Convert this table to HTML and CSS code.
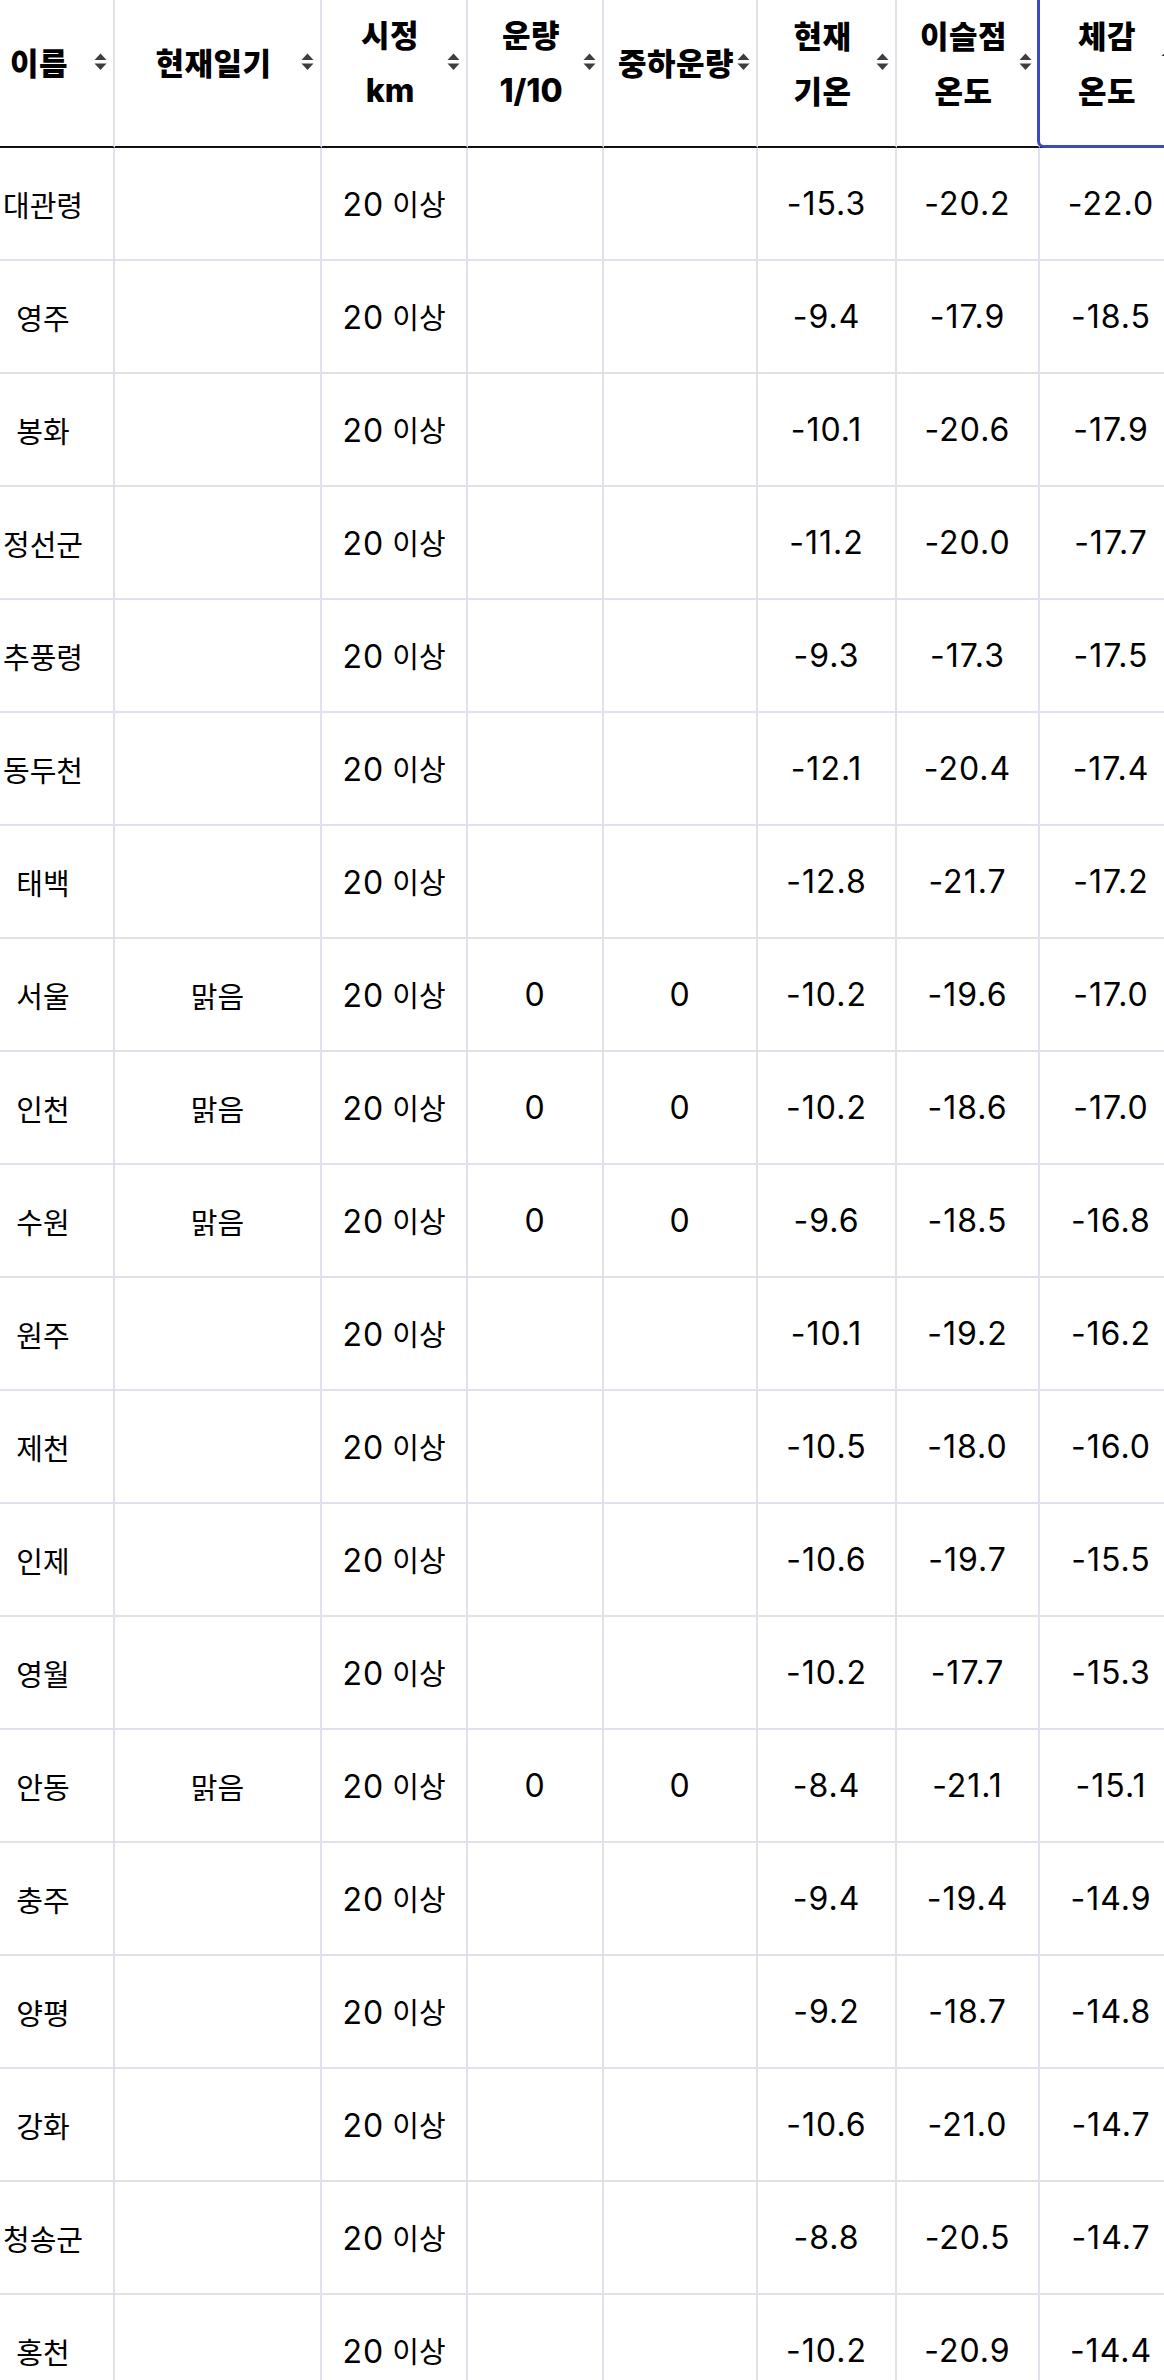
FILE: index.html
```html
<!DOCTYPE html>
<html lang="ko">
<head>
<meta charset="utf-8">
<title>관측 자료</title>
<link rel="stylesheet" href="styles.css">
</head>
<body>
<div class="viewport">
  <table class="obs">
    <colgroup>
      <col class="c-name"><col class="c-wx"><col class="c-vis"><col class="c-cloud"><col class="c-low"><col class="c-temp"><col class="c-dew"><col class="c-feel">
    </colgroup>
    <thead>
      <tr>
        <th>이름<span class="sort"><svg viewBox="0 0 15 18" width="15" height="18"><path d="M7.5 0.5 L13.5 7 L1.5 7 Z"/><path d="M1.5 10.5 L13.5 10.5 L7.5 17 Z"/></svg></span></th>
        <th>현재일기<span class="sort"><svg viewBox="0 0 15 18" width="15" height="18"><path d="M7.5 0.5 L13.5 7 L1.5 7 Z"/><path d="M1.5 10.5 L13.5 10.5 L7.5 17 Z"/></svg></span></th>
        <th>시정<br><span class="lat">km</span><span class="sort"><svg viewBox="0 0 15 18" width="15" height="18"><path d="M7.5 0.5 L13.5 7 L1.5 7 Z"/><path d="M1.5 10.5 L13.5 10.5 L7.5 17 Z"/></svg></span></th>
        <th>운량<br><span class="lat">1/10</span><span class="sort"><svg viewBox="0 0 15 18" width="15" height="18"><path d="M7.5 0.5 L13.5 7 L1.5 7 Z"/><path d="M1.5 10.5 L13.5 10.5 L7.5 17 Z"/></svg></span></th>
        <th>중하운량<span class="sort"><svg viewBox="0 0 15 18" width="15" height="18"><path d="M7.5 0.5 L13.5 7 L1.5 7 Z"/><path d="M1.5 10.5 L13.5 10.5 L7.5 17 Z"/></svg></span></th>
        <th>현재<br>기온<span class="sort"><svg viewBox="0 0 15 18" width="15" height="18"><path d="M7.5 0.5 L13.5 7 L1.5 7 Z"/><path d="M1.5 10.5 L13.5 10.5 L7.5 17 Z"/></svg></span></th>
        <th>이슬점<br>온도<span class="sort"><svg viewBox="0 0 15 18" width="15" height="18"><path d="M7.5 0.5 L13.5 7 L1.5 7 Z"/><path d="M1.5 10.5 L13.5 10.5 L7.5 17 Z"/></svg></span></th>
        <th class="focused">체감<br>온도<span class="sort sort-active"><svg viewBox="0 0 15 18" width="15" height="18"><path d="M7.5 0.5 L13.5 7 L1.5 7 Z"/></svg></span></th>
      </tr>
    </thead>
    <tbody>
      <tr><td>대관령</td><td></td><td><span class="n">20</span> 이상</td><td></td><td></td><td class="n">-15.3</td><td class="n">-20.2</td><td class="n">-22.0</td></tr>
      <tr><td>영주</td><td></td><td><span class="n">20</span> 이상</td><td></td><td></td><td class="n">-9.4</td><td class="n">-17.9</td><td class="n">-18.5</td></tr>
      <tr><td>봉화</td><td></td><td><span class="n">20</span> 이상</td><td></td><td></td><td class="n">-10.1</td><td class="n">-20.6</td><td class="n">-17.9</td></tr>
      <tr><td>정선군</td><td></td><td><span class="n">20</span> 이상</td><td></td><td></td><td class="n">-11.2</td><td class="n">-20.0</td><td class="n">-17.7</td></tr>
      <tr><td>추풍령</td><td></td><td><span class="n">20</span> 이상</td><td></td><td></td><td class="n">-9.3</td><td class="n">-17.3</td><td class="n">-17.5</td></tr>
      <tr><td>동두천</td><td></td><td><span class="n">20</span> 이상</td><td></td><td></td><td class="n">-12.1</td><td class="n">-20.4</td><td class="n">-17.4</td></tr>
      <tr><td>태백</td><td></td><td><span class="n">20</span> 이상</td><td></td><td></td><td class="n">-12.8</td><td class="n">-21.7</td><td class="n">-17.2</td></tr>
      <tr><td>서울</td><td>맑음</td><td><span class="n">20</span> 이상</td><td class="n">0</td><td class="n">0</td><td class="n">-10.2</td><td class="n">-19.6</td><td class="n">-17.0</td></tr>
      <tr><td>인천</td><td>맑음</td><td><span class="n">20</span> 이상</td><td class="n">0</td><td class="n">0</td><td class="n">-10.2</td><td class="n">-18.6</td><td class="n">-17.0</td></tr>
      <tr><td>수원</td><td>맑음</td><td><span class="n">20</span> 이상</td><td class="n">0</td><td class="n">0</td><td class="n">-9.6</td><td class="n">-18.5</td><td class="n">-16.8</td></tr>
      <tr><td>원주</td><td></td><td><span class="n">20</span> 이상</td><td></td><td></td><td class="n">-10.1</td><td class="n">-19.2</td><td class="n">-16.2</td></tr>
      <tr><td>제천</td><td></td><td><span class="n">20</span> 이상</td><td></td><td></td><td class="n">-10.5</td><td class="n">-18.0</td><td class="n">-16.0</td></tr>
      <tr><td>인제</td><td></td><td><span class="n">20</span> 이상</td><td></td><td></td><td class="n">-10.6</td><td class="n">-19.7</td><td class="n">-15.5</td></tr>
      <tr><td>영월</td><td></td><td><span class="n">20</span> 이상</td><td></td><td></td><td class="n">-10.2</td><td class="n">-17.7</td><td class="n">-15.3</td></tr>
      <tr><td>안동</td><td>맑음</td><td><span class="n">20</span> 이상</td><td class="n">0</td><td class="n">0</td><td class="n">-8.4</td><td class="n">-21.1</td><td class="n">-15.1</td></tr>
      <tr><td>충주</td><td></td><td><span class="n">20</span> 이상</td><td></td><td></td><td class="n">-9.4</td><td class="n">-19.4</td><td class="n">-14.9</td></tr>
      <tr><td>양평</td><td></td><td><span class="n">20</span> 이상</td><td></td><td></td><td class="n">-9.2</td><td class="n">-18.7</td><td class="n">-14.8</td></tr>
      <tr><td>강화</td><td></td><td><span class="n">20</span> 이상</td><td></td><td></td><td class="n">-10.6</td><td class="n">-21.0</td><td class="n">-14.7</td></tr>
      <tr><td>청송군</td><td></td><td><span class="n">20</span> 이상</td><td></td><td></td><td class="n">-8.8</td><td class="n">-20.5</td><td class="n">-14.7</td></tr>
      <tr><td>홍천</td><td></td><td><span class="n">20</span> 이상</td><td></td><td></td><td class="n">-10.2</td><td class="n">-20.9</td><td class="n">-14.4</td></tr>
    </tbody>
  </table>
</div>
</body>
</html>
```

FILE: styles.css
```css
html, body {
  margin: 0;
  padding: 0;
  background: #ffffff;
}

.viewport {
  width: 1164px;
  height: 2380px;
  overflow: hidden;
}

.obs {
  margin-left: -27px;
  margin-top: -23px;
  table-layout: fixed;
  width: 1211px;
  border-collapse: separate;
  border-spacing: 0;
  font-family: "Noto Sans CJK KR", "Noto Sans", sans-serif;
  color: #000000;
}

.c-name { width: 142px; }
.c-wx { width: 207px; }
.c-vis { width: 146px; }
.c-cloud { width: 136px; }
.c-low { width: 154px; }
.c-temp { width: 139px; }
.c-dew { width: 143px; }
.c-feel { width: 144px; }

.obs thead tr {
  height: 171px;
}

.obs tbody tr {
  height: 113px;
}

.obs th {
  position: relative;
  font-weight: 900;
  font-size: 31px;
  letter-spacing: 0.5px;
  line-height: 55px;
  padding: 0 18px 0 10px;
  text-align: center;
  vertical-align: middle;
  border-right: 2px solid #dfe1ec;
  border-bottom: 2px solid #111111;
  white-space: nowrap;
}

.obs th .lat {
  font-family: Inter, "Noto Sans", sans-serif;
  font-size: 32px;
  font-weight: 800;
  letter-spacing: 0;
}

.obs th .sort {
  position: absolute;
  right: 5px;
  top: 50%;
  width: 15px;
  height: 18px;
  margin-top: -9px;
  line-height: 0;
}

.obs th .sort-active {
  right: 7px;
  margin-top: -13px;
}

.obs th .sort svg {
  display: block;
  fill: #3c3e40;
}

.obs th.focused::after {
  content: "";
  position: absolute;
  left: -3px;
  right: 0;
  top: -4px;
  bottom: -2px;
  border: 3px solid #3b49c2;
  border-radius: 7px;
  pointer-events: none;
}

.obs td {
  font-size: 29px;
  line-height: 40px;
  padding: 0 4px;
  text-align: center;
  vertical-align: middle;
  border-right: 2px solid #dfe1ec;
  border-bottom: 2px solid #dfe1ec;
  white-space: nowrap;
}

.obs .n {
  font-family: Inter, "Noto Sans", sans-serif;
  font-size: 32px;
  letter-spacing: 1px;
}
```
